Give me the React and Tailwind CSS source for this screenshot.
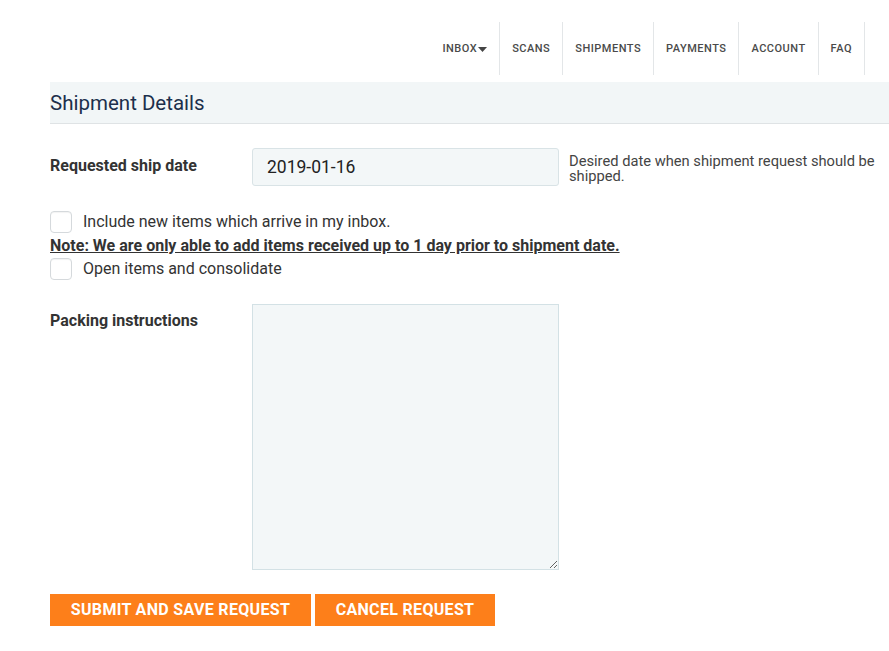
import React from 'react';

const navItems = ['INBOX', 'SCANS', 'SHIPMENTS', 'PAYMENTS', 'ACCOUNT', 'FAQ'];

const Checkbox = ({ label }) => (
  <label className="flex items-center gap-[11px] h-[23px]">
    <span className="w-[22px] h-[22px] rounded-[4px] border border-[#d5d9dc] bg-white shadow-[inset_0_1px_1px_rgba(0,0,0,0.05)]" />
    <span className="text-[16px] text-[#333]">{label}</span>
  </label>
);

export default function App() {
  return (
    <div className="min-h-[651px] bg-white text-[#333]" style={{ fontFamily: 'Roboto, "Liberation Sans", sans-serif' }}>
      <nav className="flex justify-end pt-[22px] pr-[24px]">
        {navItems.map(item => (
          <div
            key={item}
            className="h-[53px] flex items-center pt-[2px] px-[12px] border-r border-[#e3e6e8] text-[11px] font-medium tracking-[0.045em] text-[#4a4a4a]"
          >
            {item}
            {item === 'INBOX' && (
              <svg className="ml-[1px]" width="9" height="5" viewBox="0 0 9 5">
                <path d="M0 0h9L4.5 5z" fill="#444" />
              </svg>
            )}
          </div>
        ))}
      </nav>

      <div className="pl-[50px] mt-[7px]">
        <div className="h-[42px] bg-[#f2f6f7] border-b border-[#dfe3e5] flex items-center">
          <h1 className="text-[20.5px] text-[#1c2f4c] leading-none mt-[1px]">Shipment Details</h1>
        </div>

        <div className="flex mt-[24px]">
          <div className="w-[202px] pt-[6px] text-[16px] font-bold text-[#333]">Requested ship date</div>
          <input
            defaultValue="2019-01-16"
            className="w-[307px] h-[38px] px-[14px] bg-[#f3f7f8] border border-[#d9e3e6] rounded-[3px] text-[17.5px] text-[#222] outline-none"
          />
          <div className="ml-[10px] w-[312px] pt-[6px] text-[14.7px] leading-[15px] text-[#444]">
            Desired date when shipment request should be shipped.
          </div>
        </div>

        <div className="mt-[24px]">
          <Checkbox label="Include new items which arrive in my inbox." />
          <div className="mt-[2px] text-[16px] font-bold underline text-[#333] leading-[21px]">
            Note: We are only able to add items received up to 1 day prior to shipment date.
          </div>
          <div className="mt-[1px]">
            <Checkbox label="Open items and consolidate" />
          </div>
        </div>

        <div className="flex mt-[24px]">
          <div className="w-[202px] pt-[5px] text-[16px] font-bold text-[#333]">Packing instructions</div>
          <textarea className="w-[307px] h-[266px] bg-[#f3f7f8] border border-[#d3e1e5] outline-none" />
        </div>

        <div className="flex gap-[4px] mt-[24px]">
          <button className="w-[261px] h-[32px] bg-[#fd7f1a] text-white text-[16px] font-bold tracking-[0.02em]">
            SUBMIT AND SAVE REQUEST
          </button>
          <button className="w-[180px] h-[32px] bg-[#fd7f1a] text-white text-[16px] font-bold tracking-[0.02em]">
            CANCEL REQUEST
          </button>
        </div>
      </div>
    </div>
  );
}
